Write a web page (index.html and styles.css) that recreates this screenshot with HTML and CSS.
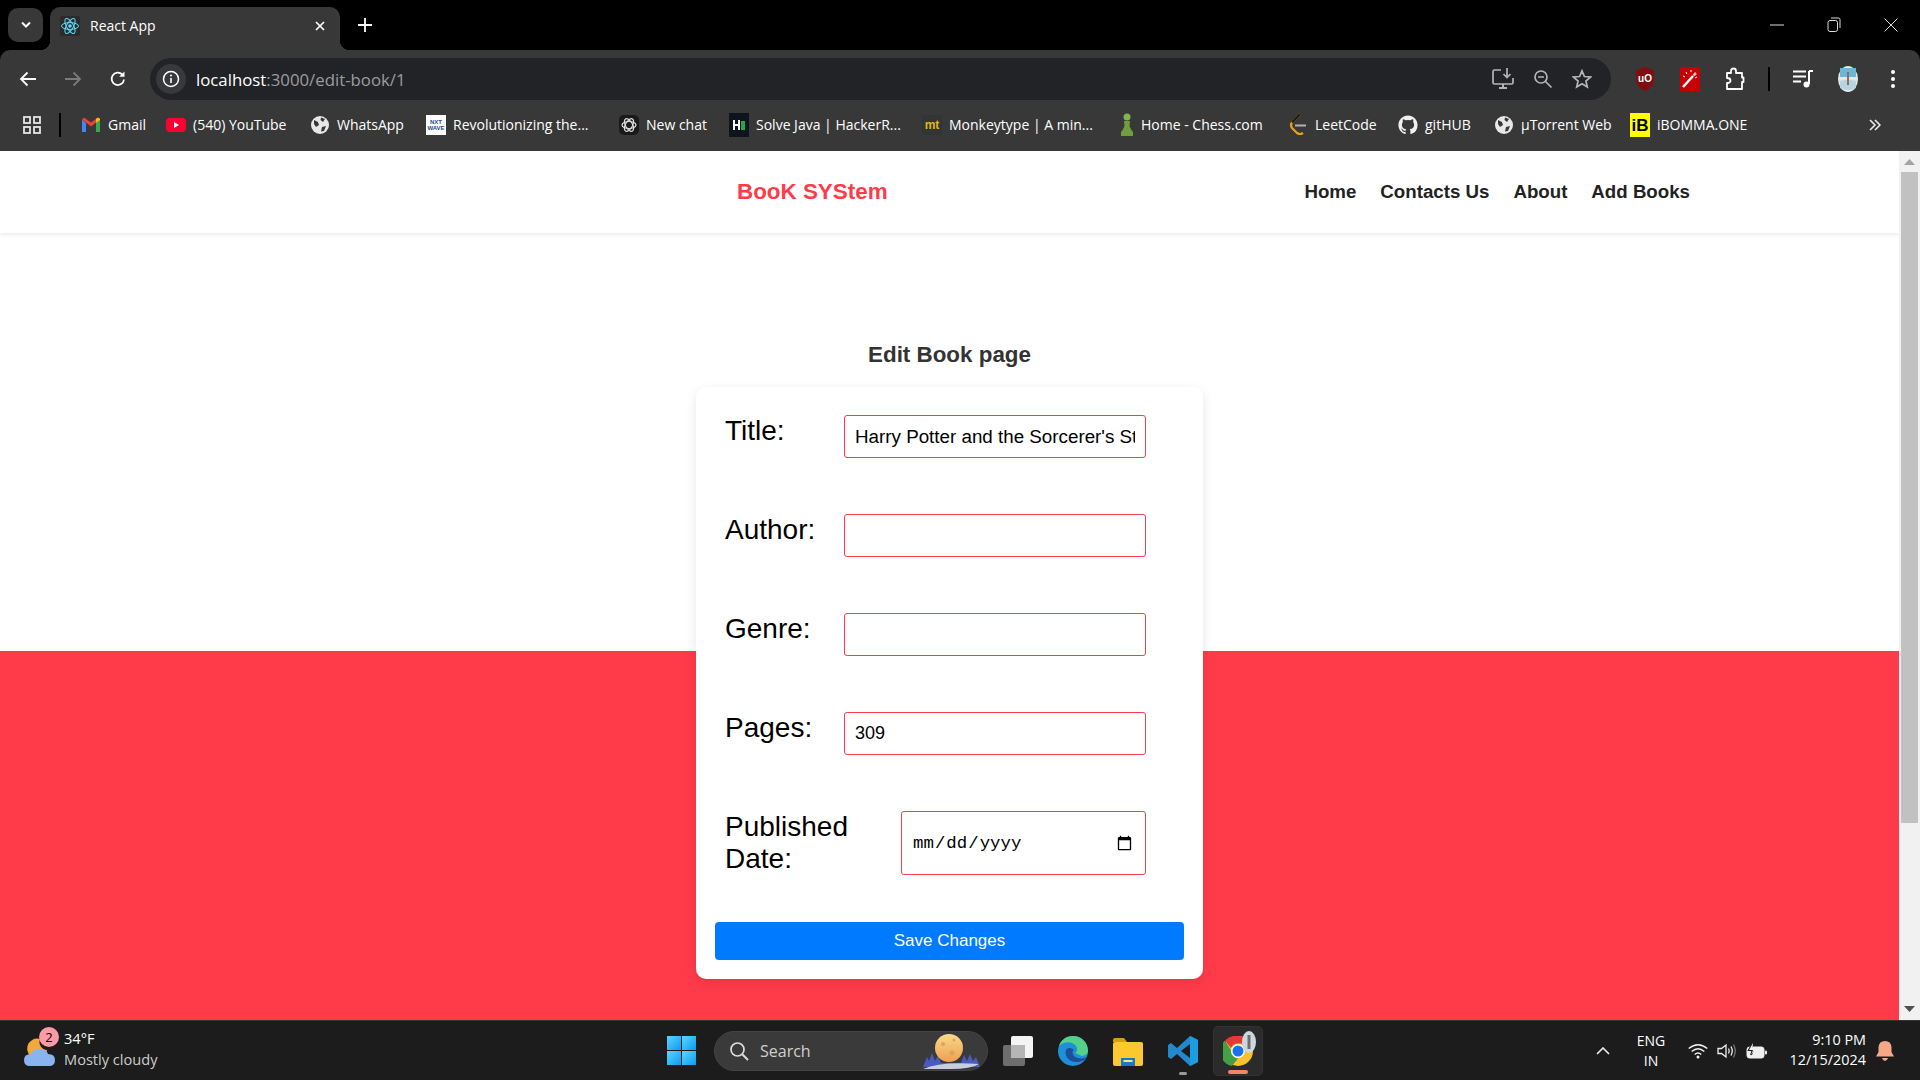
FILE: index.html
```html
<!DOCTYPE html>
<html lang="en">
<head>
  <meta charset="UTF-8">
  <meta name="viewport" content="width=device-width, initial-scale=1.0">
  <title>React App</title>
  <link rel="stylesheet" href="styles.css">
</head>
<body>

  <!-- browser tabs -->
  <div class="tabstrip">
    <div class="tab-search">
      <svg width="12" height="8" viewBox="0 0 12 8"><path d="M2 1.5 6 5.5 10 1.5" fill="none" stroke="#fff" stroke-width="2"/></svg>
    </div>
    <div class="tab">
      <svg class="tab-icon" width="20" height="20" viewBox="0 0 20 20">
        <rect width="20" height="20" rx="2" fill="#2b2b2b"/>
        <circle cx="10" cy="10" r="1.8" fill="#61dafb"/>
        <g fill="none" stroke="#61dafb" stroke-width="1">
          <ellipse cx="10" cy="10" rx="8.5" ry="3.4"/>
          <ellipse cx="10" cy="10" rx="8.5" ry="3.4" transform="rotate(60 10 10)"/>
          <ellipse cx="10" cy="10" rx="8.5" ry="3.4" transform="rotate(120 10 10)"/>
        </g>
      </svg>
      <span class="tab-title">React App</span>
      <svg class="tab-close" width="10" height="10" viewBox="0 0 10 10"><path d="M1 1 9 9M9 1 1 9" stroke="#fff" stroke-width="1.7"/></svg>
    </div>
    <svg class="tab-new" width="14" height="14" viewBox="0 0 14 14"><path d="M7 0V14M0 7H14" stroke="#fff" stroke-width="1.8"/></svg>
    <div class="window-controls">
      <svg width="14" height="14" viewBox="0 0 14 14"><path d="M0 7H14" stroke="#ddd" stroke-width="1"/></svg>
      <svg width="14" height="16" viewBox="0 0 14 16"><rect x="1" y="3.5" width="9.5" height="11" rx="2" fill="none" stroke="#ddd"/><path d="M4 1H11.5Q13 1 13 2.5V11" fill="none" stroke="#ddd"/></svg>
      <svg width="14" height="14" viewBox="0 0 14 14"><path d="M.5 .5 13.5 13.5M13.5 .5 .5 13.5" stroke="#ddd" stroke-width="1"/></svg>
    </div>
  </div>

  <!-- address bar -->
  <div class="toolbar">
    <div class="tool-btn">
      <svg width="18" height="16" viewBox="0 0 18 16"><path d="M17 8H2M8.5 1.5 2 8l6.5 6.5" fill="none" stroke="#fff" stroke-width="1.8"/></svg>
    </div>
    <div class="tool-btn">
      <svg width="18" height="16" viewBox="0 0 18 16"><path d="M1 8H16M9.5 1.5 16 8l-6.5 6.5" fill="none" stroke="#7b7b7b" stroke-width="1.8"/></svg>
    </div>
    <div class="tool-btn">
      <svg width="18" height="18" viewBox="0 0 18 18"><path d="M15 9.5A6.2 6.2 0 1 1 13.3 4.5" fill="none" stroke="#fff" stroke-width="1.8"/><path d="M15.5 1.5V6.8H10.2Z" fill="#fff"/></svg>
    </div>
    <div class="omnibox">
      <div class="site-info">
        <svg width="18" height="18" viewBox="0 0 18 18"><circle cx="9" cy="9" r="7.5" fill="none" stroke="#fff" stroke-width="1.5"/><path d="M9 8V13" stroke="#fff" stroke-width="1.6"/><circle cx="9" cy="5.6" r="1" fill="#fff"/></svg>
      </div>
      <div class="url">localhost<span class="url-rest">:3000/edit-book/1</span></div>
      <div class="omni-actions">
        <svg width="22" height="24" viewBox="0 0 22 24"><path d="M9 3H2.5Q1 3 1 4.5V15.5Q1 17 2.5 17H19.5Q21 17 21 15.5V11" fill="none" stroke="#b5b5b5" stroke-width="1.7"/><path d="M7 21H15M11 17V21" stroke="#b5b5b5" stroke-width="2"/><path d="M15 1V10M11.5 7 15 10.5 18.5 7" fill="none" stroke="#b5b5b5" stroke-width="1.7"/></svg>
        <svg width="20" height="20" viewBox="0 0 20 20"><circle cx="8" cy="8" r="6" fill="none" stroke="#b5b5b5" stroke-width="1.7"/><path d="M5 8H11M12.5 12.5 18.5 18.5" stroke="#b5b5b5" stroke-width="1.7"/></svg>
        <svg width="20" height="20" viewBox="0 0 20 20"><path d="M10 1.8 12.4 7.5 18.6 8 13.9 12 15.3 18 10 14.8 4.7 18 6.1 12 1.4 8 7.6 7.5Z" fill="none" stroke="#b5b5b5" stroke-width="1.7"/></svg>
      </div>
    </div>
    <div class="tool-right">
      <div class="tool-btn">
        <svg width="20" height="24" viewBox="0 0 20 24"><path d="M10 0 19 3V13Q19 20 10 24 1 20 1 13V3Z" fill="#800e10"/><text x="10" y="15" class="ublock-text">uO</text></svg>
      </div>
      <div class="tool-btn">
        <svg width="20" height="24" viewBox="0 0 20 24"><rect width="20" height="24" fill="#c80000"/><path d="M3 20 13 9" stroke="#fff" stroke-width="2.5"/><path d="M13.5 8.5 16 6" stroke="#f5c0c0" stroke-width="2.5"/><path d="M6 5 7 7M11 3V5M17 10 15 11M3 9 5 10" stroke="#fff"/></svg>
      </div>
      <div class="tool-btn">
        <svg width="20" height="24" viewBox="0 0 20 24"><path d="M2 6H6V4Q6 1.5 8.5 1.5T11 4V6H17V10.5H18.5V15H17V22H2V16Q5.5 16 5.5 13.5T2 11Z" fill="none" stroke="#fff" stroke-width="1.8" stroke-linejoin="round"/></svg>
      </div>
      <div class="tool-sep"></div>
      <div class="tool-btn">
        <svg width="20" height="20" viewBox="0 0 20 20"><path d="M0 2.5H13M0 7.5H13M0 12.5H8" stroke="#fff" stroke-width="1.8"/><path d="M16 2V15" stroke="#fff" stroke-width="2"/><path d="M16 2H20" stroke="#fff" stroke-width="2"/><circle cx="13.5" cy="15.5" r="3" fill="#fff"/></svg>
      </div>
      <div class="tool-btn">
        <svg width="20" height="26" viewBox="0 0 20 26"><ellipse cx="10" cy="13" rx="10" ry="13" fill="#dfe9ee"/><path d="M2 2H18V11H2Z" fill="#6fb5d8"/><path d="M2 15Q10 12 18 15V22Q10 26 2 22Z" fill="#b8d4e2"/><path d="M10 6V19" stroke="#8a6f62" stroke-width="2"/></svg>
      </div>
      <div class="tool-btn">
        <svg width="4" height="20" viewBox="0 0 4 20"><circle cx="2" cy="3" r="2" fill="#fff"/><circle cx="2" cy="10" r="2" fill="#fff"/><circle cx="2" cy="17" r="2" fill="#fff"/></svg>
      </div>
    </div>
  </div>

  <!-- bookmarks -->
  <div class="bookmarks">
    <svg class="apps" width="18" height="18" viewBox="0 0 18 18"><g fill="none" stroke="#e6e6e6" stroke-width="1.8"><rect x="1" y="1" width="6" height="6"/><rect x="11" y="1" width="6" height="6"/><rect x="1" y="11" width="6" height="6"/><rect x="11" y="11" width="6" height="6"/></g></svg>
    <div class="bm-sep"></div>
    <div class="bm-list">
      <div class="bm">
        <svg width="20" height="18" viewBox="0 0 20 18"><path d="M1 3.5V16H5V7Z" fill="#4285f4"/><path d="M15 7V16H19V3.5Z" fill="#34a853"/><path d="M1 3.5 10 10.5 19 3.5 17 1.5 10 6.5 3 1.5Z" fill="#ea4335"/><path d="M15 3V7L19 4V3Q17 .5 15 3Z" fill="#fbbc04"/></svg>
        <span>Gmail</span>
      </div>
      <div class="bm">
        <svg width="20" height="20" viewBox="0 0 20 20"><rect y="3" width="20" height="14" rx="4" fill="#ff0033"/><path d="M8 7V13L13 10Z" fill="#fff"/></svg>
        <span>(540) YouTube</span>
      </div>
      <div class="bm">
        <svg width="20" height="20" viewBox="0 0 20 20"><circle cx="10" cy="10" r="9" fill="#e8e8e8"/><path d="M4 5 8 7 9 10 6 12 4 9ZM12 12 16 11 14 16 11 16.5ZM11 2.5 15 4 13 7 10.5 5Z" fill="#383838"/></svg>
        <span>WhatsApp</span>
      </div>
      <div class="bm">
        <svg width="20" height="20" viewBox="0 0 20 20"><rect width="20" height="20" fill="#fff"/><text x="10" y="9" class="fav-tiny">NXT</text><text x="10" y="15" class="fav-tiny">WAVE</text></svg>
        <span>Revolutionizing the...</span>
      </div>
      <div class="bm">
        <svg width="20" height="20" viewBox="0 0 20 20"><rect width="20" height="20" rx="5" fill="#1a1a1a"/><g fill="none" stroke="#ddd" stroke-width="1.2"><ellipse cx="10" cy="10" rx="7" ry="3.5"/><ellipse cx="10" cy="10" rx="7" ry="3.5" transform="rotate(60 10 10)"/><ellipse cx="10" cy="10" rx="7" ry="3.5" transform="rotate(120 10 10)"/></g></svg>
        <span>New chat</span>
      </div>
      <div class="bm">
        <svg width="20" height="24" viewBox="0 0 20 24"><rect width="20" height="24" fill="#0e141e"/><path d="M5 7V17M10 7V17M5 12H10" stroke="#fff" stroke-width="2"/><rect x="12" y="8" width="4" height="9" fill="#1ba94c"/></svg>
        <span>Solve Java | HackerR...</span>
      </div>
      <div class="bm">
        <svg width="20" height="20" viewBox="0 0 20 20"><rect width="20" height="20" rx="3" fill="#323437"/><text x="10" y="14" class="fav-mt">mt</text></svg>
        <span>Monkeytype | A min...</span>
      </div>
      <div class="bm bm-narrow">
        <svg width="14" height="24" viewBox="0 0 14 24"><circle cx="7" cy="4" r="3.5" fill="#81b64c"/><path d="M4 8H10L9.5 13Q11 17 13 19V23H1V19Q3 17 4.5 13Z" fill="#6f9e3f"/></svg>
        <span>Home - Chess.com</span>
      </div>
      <div class="bm">
        <svg width="18" height="24" viewBox="0 0 18 24"><path d="M11 1 3 9.5Q1 12 3 15L8 20Q11 22 14 20" fill="none" stroke="#e6a020" stroke-width="2.2"/><path d="M11 1 3 9.5" fill="none" stroke="#1a1a1a" stroke-width="2.2"/><path d="M6 12.5H17" stroke="#b3b3b3" stroke-width="2"/></svg>
        <span>LeetCode</span>
      </div>
      <div class="bm">
        <svg width="20" height="20" viewBox="0 0 24 24"><path fill="#f0f0f0" d="M12 .5C5.65 .5 .5 5.65 .5 12c0 5.08 3.29 9.39 7.86 10.91.58.1.79-.25.79-.56v-2.15c-3.2.7-3.87-1.36-3.87-1.36-.52-1.33-1.28-1.68-1.28-1.68-1.04-.71.08-.7.08-.7 1.15.08 1.76 1.18 1.76 1.18 1.03 1.76 2.69 1.25 3.35.96.1-.74.4-1.25.73-1.54-2.55-.29-5.24-1.28-5.24-5.68 0-1.26.45-2.28 1.18-3.09-.12-.29-.51-1.46.11-3.05 0 0 .96-.31 3.16 1.18a10.9 10.9 0 0 1 5.75 0c2.2-1.49 3.16-1.18 3.16-1.18.63 1.59.23 2.76.11 3.05.74.81 1.18 1.83 1.18 3.09 0 4.41-2.69 5.38-5.25 5.67.41.36.78 1.06.78 2.14v3.17c0 .31.21.67.8.56A11.5 11.5 0 0 0 23.5 12C23.5 5.65 18.35 .5 12 .5z"/></svg>
        <span>gitHUB</span>
      </div>
      <div class="bm">
        <svg width="20" height="20" viewBox="0 0 20 20"><circle cx="10" cy="10" r="9" fill="#e8e8e8"/><path d="M4 5 8 7 9 10 6 12 4 9ZM12 12 16 11 14 16 11 16.5ZM11 2.5 15 4 13 7 10.5 5Z" fill="#383838"/></svg>
        <span>µTorrent Web</span>
      </div>
      <div class="bm">
        <svg width="20" height="24" viewBox="0 0 20 24"><rect width="20" height="24" fill="#ffff00"/><text x="10" y="18" class="fav-ib">iB</text></svg>
        <span>iBOMMA.ONE</span>
      </div>
    </div>
    <svg class="bm-more" width="12" height="12" viewBox="0 0 12 12"><path d="M1 1 6 6 1 11M6 1 11 6 6 11" fill="none" stroke="#eee" stroke-width="1.5"/></svg>
  </div>

  <div class="viewport">
    <div class="page">
      <nav class="navbar">
        <a class="brand">BooK SYStem</a>
        <div class="nav-links">
          <a>Home</a>
          <a>Contacts Us</a>
          <a>About</a>
          <a>Add Books</a>
        </div>
      </nav>

      <main class="main">
        <h2>Edit Book page</h2>
        <form class="card">
          <div class="field">
            <label for="title">Title:</label>
            <input type="text" id="title" value="Harry Potter and the Sorcerer's Stone">
          </div>
          <div class="field">
            <label for="author">Author:</label>
            <input type="text" id="author">
          </div>
          <div class="field">
            <label for="genre">Genre:</label>
            <input type="text" id="genre">
          </div>
          <div class="field">
            <label for="pages">Pages:</label>
            <input type="number" id="pages" value="309">
          </div>
          <div class="field field-date">
            <label for="published">Published Date:</label>
            <input type="date" id="published">
          </div>
          <button type="button">Save Changes</button>
        </form>
      </main>
    </div>

    <div class="scrollbar">
      <svg class="scroll-arrow" width="11" height="6" viewBox="0 0 11 6"><path d="M5.5 0 11 6H0Z" fill="#a3a3a3"/></svg>
      <div class="scroll-track"><div class="scroll-thumb"></div></div>
      <svg class="scroll-arrow" width="11" height="6" viewBox="0 0 11 6"><path d="M0 0H11L5.5 6Z" fill="#505050"/></svg>
    </div>
  </div>

  <!-- windows taskbar -->
  <div class="taskbar">
    <div class="weather">
      <div class="weather-icon">
        <svg width="34" height="36" viewBox="0 0 34 36">
          <path d="M17 6A10 10 0 1 0 24 17 8 8 0 0 1 17 6Z" fill="#f2a93b"/>
          <path d="M7 33Q1 33 1 27 1 21 8 21 11 15 18 16 24 17 25 21 32 21 32 27 32 33 26 33Z" fill="#8ab4f0"/>
        </svg>
        <span class="weather-badge">2</span>
      </div>
      <div class="weather-text">
        <div>34°F</div>
        <div class="weather-desc">Mostly cloudy</div>
      </div>
    </div>

    <div class="start">
      <i></i><i></i><i></i><i></i>
    </div>

    <div class="search">
      <svg width="20" height="20" viewBox="0 0 20 20"><circle cx="8.5" cy="8.5" r="6.5" fill="none" stroke="#ddd" stroke-width="1.7"/><path d="M13.5 13.5 19 19" stroke="#ddd" stroke-width="1.9"/></svg>
      <span>Search</span>
      <svg class="search-art" width="60" height="40" viewBox="0 0 60 40">
        <defs>
          <linearGradient id="moon" x1="0" y1="0" x2="0" y2="1">
            <stop offset="0" stop-color="#f8d98a"/>
            <stop offset="1" stop-color="#ef9f52"/>
          </linearGradient>
        </defs>
        <path d="M2 36 6 26 8 30 11 22 14 30 17 25 20 32H40L43 24 46 30 49 23 52 30 55 26 59 36Z" fill="#4a5bc0"/>
        <circle cx="28" cy="17" r="14" fill="url(#moon)"/>
        <circle cx="22" cy="13" r="2" fill="#e0a552"/>
        <circle cx="31" cy="22" r="2.5" fill="#e0a552"/>
        <circle cx="33" cy="9" r="1.5" fill="#e0a552"/>
        <path d="M2 38Q20 30 58 33 50 38 30 38Z" fill="#c8cde0"/>
      </svg>
    </div>

    <div class="task-apps">
      <div class="task-app">
        <svg width="30" height="30" viewBox="0 0 30 30"><rect y="9" width="22" height="21" rx="2" fill="#6e6e6e"/><rect x="8" width="22" height="22" rx="2" fill="#f4f4f4"/><rect x="8" y="9" width="14" height="13" fill="#b5b5b5"/></svg>
      </div>
      <div class="task-app">
        <svg width="30" height="30" viewBox="0 0 30 30"><circle cx="15" cy="15" r="15" fill="#1f8fd8"/><path d="M30 15C30 6 23 0 15 0 8 0 3 4 1 10 6 5 14 5 18 10 20 13 19 16 17 17L24 20Q30 19 30 15Z" fill="#54d08a"/><path d="M8 14C6 20 11 26 18 26 23 26 27 24 29 21 25 23 19 23 16 20 14 18 14 15 16 14 12 11 9 12 8 14Z" fill="#1b4f9c"/></svg>
      </div>
      <div class="task-app">
        <svg width="30" height="30" viewBox="0 0 30 30"><path d="M0 4Q0 2 2 2H11L14 6H0Z" fill="#d99e0b"/><rect y="6" width="30" height="24" rx="2" fill="#fbc92f"/><rect x="8" y="22" width="14" height="8" fill="#1a78c8"/><rect x="10.5" y="24" width="9" height="2" fill="#fbe38a"/></svg>
      </div>
      <div class="task-app task-app-open">
        <svg width="30" height="30" viewBox="0 0 30 30"><path d="M22 0 30 4V26L22 30 9 18 3 23 0 21V9L3 7 9 12Z" fill="#2489ca"/><path d="M22 8 13 15 22 22Z" fill="#1c1c1c"/><path d="M22 0 30 4V26L22 30Z" fill="#1b9de2"/></svg>
      </div>
      <div class="task-app task-app-active">
        <svg width="30" height="30" viewBox="0 0 30 30"><circle cx="15" cy="15" r="15" fill="#fbc02d"/><path d="M15 0A15 15 0 0 1 28 7.5H15A7.5 7.5 0 0 0 8 12L2 4.5A15 15 0 0 1 15 0Z" fill="#e53935"/><path d="M2 4.5 8.5 15A7.5 7.5 0 0 0 15 22.5L9 30A15 15 0 0 1 2 4.5Z" fill="#43a047"/><circle cx="15" cy="15" r="7" fill="#fff"/><circle cx="15" cy="15" r="5.5" fill="#1a73e8"/></svg>
        <svg class="chrome-badge" width="14" height="22" viewBox="0 0 14 22"><ellipse cx="7" cy="11" rx="7" ry="11" fill="#ccd8de"/><path d="M7 4V18" stroke="#6d6d6d" stroke-width="3"/></svg>
      </div>
    </div>

    <div class="tray">
      <svg class="tray-chevron" width="14" height="8" viewBox="0 0 14 8"><path d="M1 7 7 1 13 7" fill="none" stroke="#eee" stroke-width="1.6"/></svg>
      <div class="tray-lang"><div>ENG</div><div>IN</div></div>
      <div class="tray-icons">
        <svg width="20" height="16" viewBox="0 0 20 16"><g fill="none" stroke="#f0f0f0" stroke-width="1.4"><path d="M.7 5.5Q10-2 19.3 5.5"/><path d="M3.7 8.5Q10 3 16.3 8.5"/><path d="M6.7 11.5Q10 8.5 13.3 11.5"/></g><circle cx="10" cy="14" r="1.5" fill="#f0f0f0"/></svg>
        <svg width="20" height="16" viewBox="0 0 20 16"><path d="M1 5.5H4.5L9 2V14L4.5 10.5H1Z" fill="none" stroke="#f0f0f0" stroke-width="1.3"/><path d="M11.5 5.5Q13 8 11.5 10.5M14 3.5Q16.5 8 14 12.5" fill="none" stroke="#f0f0f0" stroke-width="1.3"/><path d="M16.5 1.5Q20 8 16.5 14.5" fill="none" stroke="#777" stroke-width="1.3"/></svg>
        <svg width="21" height="16" viewBox="0 0 21 16"><rect x="1" y="4" width="17" height="11" rx="2.5" fill="#f0f0f0" stroke="#f0f0f0"/><rect x="19" y="7.5" width="2" height="4" rx="1" fill="#f0f0f0"/><path d="M7 0 3 7H7L5 12" fill="#1c1c1c" stroke="#1c1c1c" stroke-width="2"/><path d="M7 0 3 7H7L5 12 10 5H6.5Z" fill="#f0f0f0"/></svg>
      </div>
      <div class="tray-clock"><div>9:10 PM</div><div>12/15/2024</div></div>
      <svg class="tray-bell" width="18" height="20" viewBox="0 0 18 20"><path d="M9 0Q15 0 15.5 6V11L18 15.5H0L2.5 11V6Q3 0 9 0Z" fill="#f7a688"/><path d="M6 17H12Q11 20 9 20T6 17Z" fill="#f7a688"/></svg>
    </div>
  </div>

</body>
</html>
```

FILE: styles.css
```css
* {
  box-sizing: border-box;
}
body {
  margin: 0;
  width: 1920px;
  height: 1080px;
  overflow: hidden;
  display: flex;
  flex-direction: column;
  background-color: black;
  font-family: 'Liberation Sans', Arial, sans-serif;
}

/* tab strip */
.tabstrip {
  height: 50px;
  display: flex;
  align-items: flex-end;
  background-color: black;
  color: white;
}
.tab-search {
  width: 35px;
  height: 34px;
  margin: 0 7px 8px 8px;
  display: flex;
  align-items: center;
  justify-content: center;
  background-color: #383838;
  border-radius: 10px;
}
.tab {
  position: relative;
  width: 290px;
  height: 43px;
  display: flex;
  align-items: center;
  padding: 0 15px 6px 10px;
  background-color: #383838;
  border-radius: 10px 10px 0 0;
}
.tab::before,
.tab::after {
  content: "";
  position: absolute;
  bottom: 0;
  width: 10px;
  height: 10px;
}
.tab::before {
  left: -10px;
  background: radial-gradient(circle at 0 0, black 10px, #383838 10.5px);
}
.tab::after {
  right: -10px;
  background: radial-gradient(circle at 100% 0, black 10px, #383838 10.5px);
}
.tab-icon {
  margin-right: 10px;
}
.tab-title {
  flex: 1;
  font: 14px 'Open Sans', sans-serif;
}
.tab-new {
  margin: 0 0 18px 18px;
}
.window-controls {
  margin-left: auto;
  width: 150px;
  height: 50px;
  padding-right: 22px;
  display: flex;
  align-items: center;
  justify-content: space-between;
}

/* toolbar */
.toolbar {
  height: 50px;
  padding-left: 5px;
  display: flex;
  align-items: flex-end;
  background-color: #383838;
  border-radius: 10px 10px 0 0;
}
.tool-btn {
  width: 45px;
  height: 42px;
  display: flex;
  align-items: center;
  justify-content: center;
  flex-shrink: 0;
}
.omnibox {
  width: 1461px;
  height: 42px;
  margin-left: 10px;
  padding-left: 6px;
  display: flex;
  align-items: center;
  background-color: #222327;
  border-radius: 21px;
}
.site-info {
  width: 30px;
  height: 30px;
  display: flex;
  align-items: center;
  justify-content: center;
  background-color: #38393c;
  border-radius: 50%;
}
.url {
  margin-left: 10px;
  font: 16.8px 'Open Sans', sans-serif;
  color: white;
}
.url-rest {
  color: #9b9c9e;
}
.omni-actions {
  margin-left: auto;
  padding-right: 19px;
  display: flex;
  align-items: center;
  gap: 19px;
}
.tool-right {
  margin-left: 11px;
  display: flex;
  align-items: center;
}
.tool-sep {
  width: 2px;
  height: 24px;
  margin: 0 10px 0 11px;
  background-color: black;
}
.ublock-text {
  font: bold 10px 'Liberation Sans', sans-serif;
  fill: white;
  text-anchor: middle;
}

/* bookmarks */
.bookmarks {
  height: 51px;
  padding-bottom: 2px;
  display: flex;
  align-items: center;
  background-color: #383838;
  color: white;
  font: 14px 'Open Sans', sans-serif;
}
.apps {
  margin-left: 23px;
  flex-shrink: 0;
}
.bm-sep {
  width: 2px;
  height: 24px;
  margin-left: 18px;
  background-color: black;
}
.bm-list {
  margin-left: 20px;
  display: grid;
  grid-template-columns: 85px 144px 116px 193px 110px 193px 195px 171px 110px 96px 136px 130px;
}
.bm {
  display: flex;
  align-items: center;
  gap: 7px;
  white-space: nowrap;
}
.bm svg {
  width: 20px;
  flex-shrink: 0;
}
.bm-narrow {
  gap: 4px;
}
.fav-tiny {
  font: bold 6px 'Liberation Sans', sans-serif;
  fill: #1d4c8f;
  text-anchor: middle;
}
.fav-mt {
  font: bold 12px 'Liberation Sans', sans-serif;
  fill: #e2b714;
  text-anchor: middle;
}
.fav-ib {
  font: bold 17px 'Liberation Sans', sans-serif;
  fill: black;
  text-anchor: middle;
}
.bm-more {
  margin-left: auto;
  margin-right: 39px;
}

/* page */
.viewport {
  height: 869px;
  display: flex;
  background-color: white;
}
.page {
  flex: 1;
  display: flex;
  flex-direction: column;
  overflow: hidden;
}
.navbar {
  height: 82px;
  flex-shrink: 0;
  padding: 0 209px 0 737px;
  display: flex;
  align-items: center;
  justify-content: space-between;
  background-color: white;
  box-shadow: 0 2px 4px rgba(0, 0, 0, 0.08);
  position: relative;
}
.brand {
  font-size: 22.4px;
  font-weight: bold;
  color: #ff3b4a;
}
.nav-links {
  display: flex;
  gap: 24px;
  font-size: 18.7px;
  font-weight: bold;
  color: #222;
}
.main {
  flex: 1;
  padding-top: 108px;
  background: linear-gradient(white 418px, #ff3b4a 418px);
}
h2 {
  margin: 0 0 18px;
  font-size: 22.4px;
  line-height: 28px;
  text-align: center;
  color: #333;
}
.card {
  width: 507px;
  height: 592px;
  margin: 0 auto;
  padding: 28px 19px 0;
  background-color: white;
  border-radius: 10px;
  box-shadow: 0 4px 12px rgba(0, 0, 0, 0.1);
}
.field {
  height: 99px;
  padding: 0 38px 0 10px;
  display: flex;
  justify-content: space-between;
  align-items: flex-start;
}
.field label {
  font-size: 28px;
  line-height: 32px;
  color: black;
}
.field input {
  width: 302px;
  height: 43px;
  padding: 10px;
  border: 1.5px solid #ff3b4a;
  border-radius: 3px;
  font-family: 'Liberation Sans', Arial, sans-serif;
  font-size: 18.8px;
  color: black;
  background-color: white;
  outline: none;
}
.field input[type="number"] {
  font-size: 18px;
}
.field input[type="number"]::-webkit-inner-spin-button {
  display: none;
}
.field-date {
  height: 111px;
}
.field-date label {
  width: 130px;
}
.field-date input {
  width: 245px;
  height: 64px;
  padding-top: 11px;
  font-family: 'Liberation Mono', monospace;
  font-size: 17.4px;
}
button {
  display: block;
  width: 100%;
  height: 38px;
  background-color: #007bff;
  color: white;
  border: none;
  border-radius: 4px;
  font-family: 'Liberation Sans', Arial, sans-serif;
  font-size: 17px;
}

/* page scrollbar */
.scrollbar {
  width: 21px;
  display: flex;
  flex-direction: column;
  align-items: center;
  background-color: #f1f1f1;
}
.scroll-arrow {
  margin: 8px 0;
  flex-shrink: 0;
}
.scroll-track {
  flex: 1;
  width: 100%;
  padding: 0 2px;
  margin-top: -1px;
}
.scroll-thumb {
  height: 651px;
  background-color: #c1c1c1;
}

/* taskbar */
.taskbar {
  height: 60px;
  display: flex;
  align-items: center;
  background-color: #1c1c1c;
  border-top: 1px solid #333;
  color: white;
  font: 14px 'Open Sans', sans-serif;
}
.weather {
  width: 667px;
  padding-left: 23px;
  display: flex;
  align-items: center;
  font-size: 14.6px;
}
.weather-icon {
  position: relative;
  width: 34px;
  height: 36px;
}
.weather-badge {
  position: absolute;
  top: -6px;
  left: 16px;
  width: 20px;
  height: 20px;
  line-height: 20px;
  text-align: center;
  border-radius: 50%;
  background-color: #fc9ba6;
  color: black;
  font-size: 13px;
}
.weather-text {
  margin: -3px 0 0 7px;
  line-height: 21px;
}
.weather-desc {
  color: #cccccc;
}
.start {
  width: 29px;
  height: 29px;
  display: grid;
  grid-template-columns: 1fr 1fr;
  gap: 1px;
}
.start i {
  background: linear-gradient(135deg, #5fd4ff, #0a9bf0);
}
.search {
  width: 274px;
  height: 40px;
  margin-left: 18px;
  padding-left: 14px;
  display: flex;
  align-items: center;
  background-color: #3a3a3a;
  border-radius: 20px;
  border: 1px solid #444;
  color: #cfcfcf;
  font-size: 16px;
}
.search span {
  margin-left: 11px;
}
.search-art {
  margin-left: auto;
  margin-right: 6px;
}
.task-apps {
  margin-left: 5px;
  display: flex;
  gap: 5px;
}
.task-app {
  position: relative;
  width: 50px;
  height: 50px;
  display: flex;
  align-items: center;
  justify-content: center;
  border-radius: 5px;
}
.task-app-open::after,
.task-app-active::after {
  content: "";
  position: absolute;
  bottom: 1px;
  height: 3px;
  border-radius: 2px;
}
.task-app-open::after {
  width: 8px;
  background-color: #9a9a9a;
}
.task-app-active {
  background-color: #2b2b2b;
  border: 1px solid #333;
}
.task-app-active::after {
  width: 20px;
  height: 4px;
  background-color: #f2836f;
}
.chrome-badge {
  position: absolute;
  top: 4px;
  right: 6px;
}
.tray {
  margin-left: auto;
  padding-right: 26px;
  display: flex;
  align-items: center;
  text-align: center;
}
.tray-chevron {
  margin-right: 24px;
}
.tray-lang {
  width: 34px;
  line-height: 20px;
  font-size: 14px;
}
.tray-icons {
  margin-left: 20px;
  display: flex;
  align-items: center;
  gap: 9px;
}
.tray-clock {
  margin: -2px 0 0 15px;
  width: 84px;
  text-align: right;
  line-height: 20px;
  font-size: 14.4px;
}
.tray-bell {
  margin-left: 10px;
}
```
